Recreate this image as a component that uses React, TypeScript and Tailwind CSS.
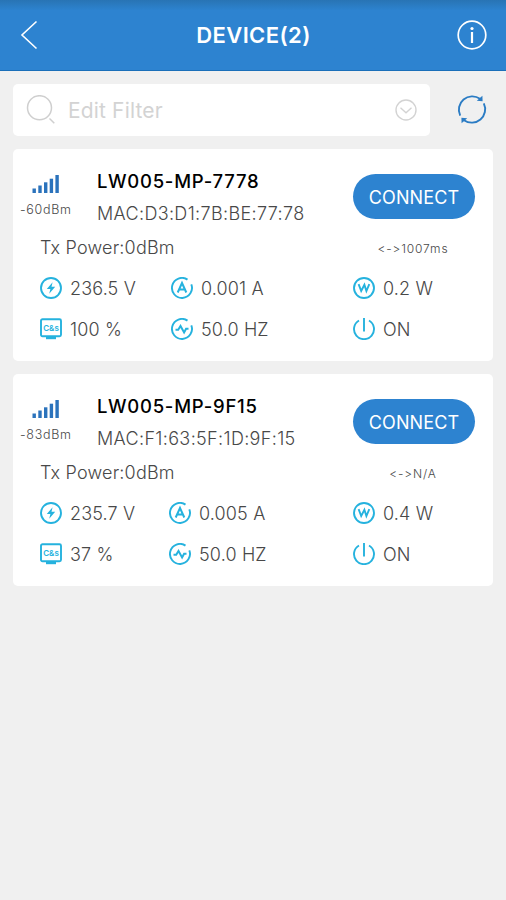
import { ReactNode } from "react"

type Device = {
    name: string
    mac: string
    rssi: string
    interval: string
    voltage: string
    current: string
    power: string
    energy: string
    columns: string
}

const devices: Device[] = [
    {
        name: "LW005-MP-7778",
        mac: "D3:D1:7B:BE:77:78",
        rssi: "-60dBm",
        interval: "<->1007ms",
        voltage: "236.5 V",
        current: "0.001 A",
        power: "0.2 W",
        energy: "100 %",
        columns: "grid-cols-[131px_182px_1fr]"
    },
    {
        name: "LW005-MP-9F15",
        mac: "F1:63:5F:1D:9F:15",
        rssi: "-83dBm",
        interval: "<->N/A",
        voltage: "235.7 V",
        current: "0.005 A",
        power: "0.4 W",
        energy: "37 %",
        columns: "grid-cols-[129px_184px_1fr]"
    }
]

export default function App() {
    return <div className="min-h-[900px] w-[506px] bg-[#f0f0f0] font-['Inter','Liberation_Sans',sans-serif] text-[#484848] [font-feature-settings:'calt'_0]">
        <AppBar title={`DEVICE(${devices.length})`} />
        <div className="flex items-center pl-[13px] pr-[18px] pt-[13px]">
            <div className="flex h-[52px] w-[417px] items-center rounded-[5px] bg-white pl-[13px] pr-[13px]">
                <SearchIcon />
                <div className="ml-[12px] flex-1 pt-px text-[21px] tracking-[0.15px] text-[#d3d3d3]">Edit Filter</div>
                <ChevronIcon />
            </div>
            <div className="ml-auto"><RefreshIcon /></div>
        </div>
        <div className="flex flex-col gap-[13px] px-[13px] pt-[13px]">
            {devices.map((device) => <DeviceCard key={device.mac} device={device} />)}
        </div>
    </div>
}

const AppBar = ({ title }: { title: string }) => {
    return <div className="flex h-[71px] items-center justify-between border-b border-[#1a6fb9] bg-linear-to-b from-[#2874b4] via-[#2d83d0] via-15% to-[#2d83d0] pl-[20px] pr-[19px]">
        <svg width="30" height="30" viewBox="0 0 30 30" fill="none" stroke="#fff" strokeWidth="1.6">
            <path d="M16.5 1.5 2 15 16.5 28.5" />
        </svg>
        <div className="pt-px text-[22px] font-semibold tracking-[0.4px] text-white">{title}</div>
        <svg width="30" height="30" viewBox="0 0 30 30" fill="none" stroke="#fff" strokeWidth="1.7">
            <circle cx="15" cy="15" r="13.8" />
            <path d="M15 12V23" strokeWidth="2.2" />
            <circle cx="15" cy="8.5" r="1.6" fill="#fff" stroke="none" />
        </svg>
    </div>
}

const DeviceCard = ({ device }: { device: Device }) => {
    return <div className="h-[212px] rounded-[5px] bg-white">
        <div className="flex h-[84px] pr-[18px]">
            <div className="flex w-[84px] flex-col items-start pt-[25px]">
                <div className="ml-[19px]"><SignalIcon /></div>
                <div className="ml-[7px] mt-[7px] text-[12.5px] font-light leading-[17px] tracking-[0.7px]">{device.rssi}</div>
            </div>
            <div className="flex-1 pt-[20px]">
                <div className="text-[18.5px] font-medium leading-[24px] tracking-[0.75px] text-black">{device.name}</div>
                <div className="mt-[8px] text-[18px] font-light leading-[25px] tracking-[0.35px]">MAC:{device.mac}</div>
            </div>
            <button className="mt-[25px] h-[45px] w-[122px] rounded-full bg-[#2d83d0] pt-px text-[18px] tracking-[0.1px] text-white">CONNECT</button>
        </div>
        <div className="flex h-[28px] items-center justify-between pl-[27px]">
            <div className="text-[18px] font-light tracking-[0.2px]">Tx Power:0dBm</div>
            <div className="mt-[3px] w-[160px] text-center text-[12px] font-light tracking-[0.85px]">{device.interval}</div>
        </div>
        <div className={`mt-[16px] grid ${device.columns} gap-y-[19px] pl-[27px]`}>
            <Reading icon={<VoltIcon />} value={device.voltage} />
            <Reading icon={<AmpIcon />} value={device.current} />
            <Reading icon={<WattIcon />} value={device.power} />
            <Reading icon={<EnergyIcon />} value={device.energy} />
            <Reading icon={<FrequencyIcon />} value="50.0 HZ" />
            <Reading icon={<PowerIcon />} value="ON" />
        </div>
    </div>
}

const Reading = ({ icon, value }: { icon: ReactNode, value: string }) => {
    return <div className="flex h-[22px] items-center gap-[8px]">
        {icon}
        <div className="pt-px text-[18px] font-light leading-[22px] tracking-[0.15px]">{value}</div>
    </div>
}

const ReadingSvg = ({ children }: { children: ReactNode }) => {
    return <svg width="22" height="22" viewBox="0 0 22 22" fill="none" stroke="#25b2de" strokeWidth="1.9">{children}</svg>
}

const VoltIcon = () => <ReadingSvg>
    <circle cx="11" cy="11" r="10" />
    <path d="M12.6 5.2 6.8 12h3.6l-1.2 4.8 6-7h-3.7z" fill="#25b2de" stroke="none" />
</ReadingSvg>

const AmpIcon = () => <ReadingSvg>
    <path d="M16.5 2.6A10 10 0 1 0 20.3 7.3" />
    <path d="M6.7 15.5 11 6l4.3 9.5M8.5 12.5h5" strokeWidth="2" />
</ReadingSvg>

const WattIcon = () => <ReadingSvg>
    <circle cx="11" cy="11" r="10" />
    <path d="M5.6 7.2 8.2 14 11.4 7.8l2 6.2 2.9-6.8" strokeWidth="1.9" />
</ReadingSvg>

const EnergyIcon = () => <ReadingSvg>
    <rect x="1" y="1.2" width="20" height="17" rx="1.5" />
    <path d="M6 20h10" strokeWidth="2.4" />
    <text x="11" y="13" textAnchor="middle" fontSize="8" fontWeight="600" fill="#25b2de" stroke="none">C&amp;s</text>
</ReadingSvg>

const FrequencyIcon = () => <ReadingSvg>
    <path d="M16.5 2.6A10 10 0 1 0 20.3 7.3" />
    <path d="M4.5 11.7h2.7L9.5 8l3.6 6.5 2-3.7h2.4" strokeWidth="2" />
</ReadingSvg>

const PowerIcon = () => <ReadingSvg>
    <path d="M6 2.5a10 10 0 1 0 10 0M11 0v13.5" />
</ReadingSvg>

const SignalIcon = () => {
    return <svg width="28" height="20" viewBox="0 0 28 20" fill="#2b73bc">
        <rect x="0.5" y="14.5" width="3.4" height="4.5" />
        <rect x="6.3" y="11.5" width="3.4" height="7.5" />
        <rect x="12" y="8.3" width="3.4" height="10.7" />
        <rect x="17.7" y="4.7" width="3.4" height="14.3" />
        <rect x="23.4" y="1" width="3.4" height="18" />
    </svg>
}

const SearchIcon = () => {
    return <svg width="30" height="30" viewBox="0 0 30 30" fill="none" stroke="#cfcfcf" strokeWidth="1.5">
        <circle cx="13.5" cy="12.7" r="12" />
        <path d="m23.5 23.5 4.8 4.8" />
    </svg>
}

const ChevronIcon = () => {
    return <svg width="22" height="22" viewBox="0 0 22 22" fill="none" stroke="#d3d3d3" strokeWidth="1.4">
        <circle cx="11" cy="11" r="10" />
        <path d="m5.5 8.7 5.5 5 5.5-5" />
    </svg>
}

const RefreshIcon = () => {
    return <svg width="32" height="32" viewBox="0 0 32 32" fill="none" stroke="#2b7cc4" strokeWidth="1.9">
        <path d="M4.2 21.6A13.4 13.4 0 0 1 24 4.8M27.8 9.4A13.4 13.4 0 0 1 8 26.2" />
        <path d="M26.4 1.8 26.6 7.2 20.8 6.8zM5.6 29.2 5.4 23.8 11.2 24.2z" fill="#2b7cc4" stroke="none" />
    </svg>
}
